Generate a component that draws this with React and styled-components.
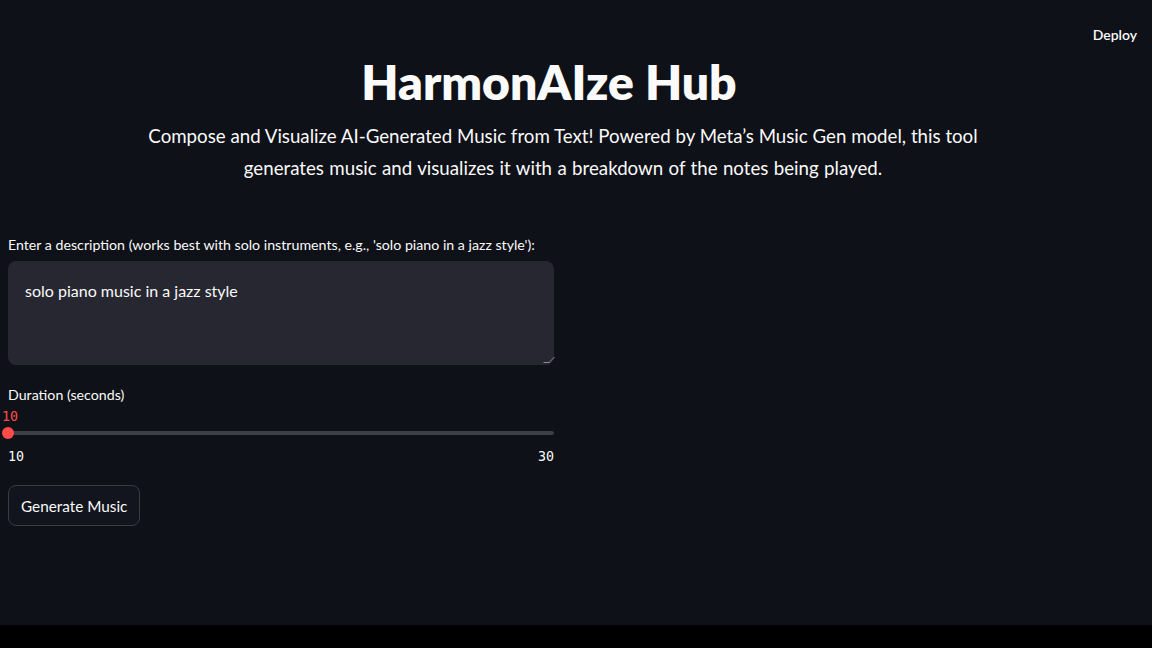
import React from "react";
import styled, { createGlobalStyle } from "styled-components";

const Global = createGlobalStyle`
  html, body { margin: 0; padding: 0; background: #000; }
  body { font-family: "Lato", "Noto Sans", sans-serif; color: #fafafa; }
`;

const Page = styled.div`
  width: 1152px;
  height: 648px;
  display: flex;
  flex-direction: column;
  background: #000;
`;

const Screen = styled.div`
  height: 625px;
  background: #0e1117;
  display: flex;
  flex-direction: column;
`;

const Header = styled.div`
  height: 60px;
  display: flex;
  justify-content: flex-end;
  align-items: flex-start;
  padding: 26px 15px 0 0;
  box-sizing: border-box;
`;

const Deploy = styled.span`
  font-size: 14px;
  font-weight: 600;
  color: #fafafa;
`;

const Main = styled.div`
  display: flex;
  flex-direction: column;
  padding: 0 8px;
`;

const Title = styled.h1`
  margin: -8px 0 0;
  text-align: center;
  font-size: 48px;
  font-weight: 800;
  line-height: 60px;
  padding-right: 54px;
`;

const Subtitle = styled.p`
  margin: 8px 0 0;
  text-align: center;
  font-size: 18.7px;
  line-height: 32px;
  padding: 0 150px 0 124px;
`;

const SecondLine = styled.span`
  word-spacing: 0.6px;
`;

const Form = styled.div`
  width: 546px;
  display: flex;
  flex-direction: column;
  margin-top: 51px;
`;

const Label = styled.label`
  font-size: 14.2px;
  line-height: 20px;
  margin-bottom: 6px;
`;

const TextArea = styled.div`
  height: 104px;
  background: #262730;
  border-radius: 8px;
  padding: 20px 17px;
  box-sizing: border-box;
  font-size: 16px;
  position: relative;
`;

const Grip = styled.span`
  position: absolute;
  right: 2px;
  bottom: 2px;
  width: 5px;
  height: 5px;
  border-right: 1px solid #8a8b90;
  border-bottom: 1px solid #8a8b90;
  transform: skew(-45deg);
`;

const SliderBlock = styled.div`
  margin-top: 20px;
  display: flex;
  flex-direction: column;
`;

const Value = styled.span`
  font-family: "DejaVu Sans Mono", "Liberation Mono", monospace;
  font-size: 13.3px;
  color: #ff4b4b;
  margin: -2px 0 0 -6px;
  line-height: 16px;
`;

const Track = styled.div`
  position: relative;
  height: 4px;
  background: #3d3f47;
  border-radius: 2px;
  margin-top: 6px;
`;

const Thumb = styled.div`
  position: absolute;
  left: -6px;
  top: -4px;
  width: 12px;
  height: 12px;
  border-radius: 50%;
  background: #ff4b4b;
`;

const Ticks = styled.div`
  display: flex;
  justify-content: space-between;
  font-family: "DejaVu Sans Mono", "Liberation Mono", monospace;
  font-size: 13.3px;
  margin-top: 14px;
  line-height: 16px;
`;

const Button = styled.button`
  align-self: flex-start;
  margin-top: 20px;
  height: 41px;
  padding: 0 12px;
  background: #12151d;
  color: #fafafa;
  border: 1px solid #3a3c44;
  border-radius: 8px;
  font-family: inherit;
  font-size: 15.3px;
`;

export default function App() {
  return (
    <Page>
      <Global />
      <Screen>
        <Header>
          <Deploy>Deploy</Deploy>
        </Header>
        <Main>
          <Title>HarmonAIze Hub</Title>
          <Subtitle>
            Compose and Visualize AI-Generated Music from Text! Powered by Meta’s Music Gen model, this tool{" "}
            <SecondLine>generates music and visualizes it with a breakdown of the notes being played.</SecondLine>
          </Subtitle>
          <Form>
            <Label>Enter a description (works best with solo instruments, e.g., 'solo piano in a jazz style'):</Label>
            <TextArea>
              solo piano music in a jazz style
              <Grip />
            </TextArea>
            <SliderBlock>
              <Label>Duration (seconds)</Label>
              <Value>10</Value>
              <Track>
                <Thumb />
              </Track>
              <Ticks>
                <span>10</span>
                <span>30</span>
              </Ticks>
            </SliderBlock>
            <Button>Generate Music</Button>
          </Form>
        </Main>
      </Screen>
    </Page>
  );
}
